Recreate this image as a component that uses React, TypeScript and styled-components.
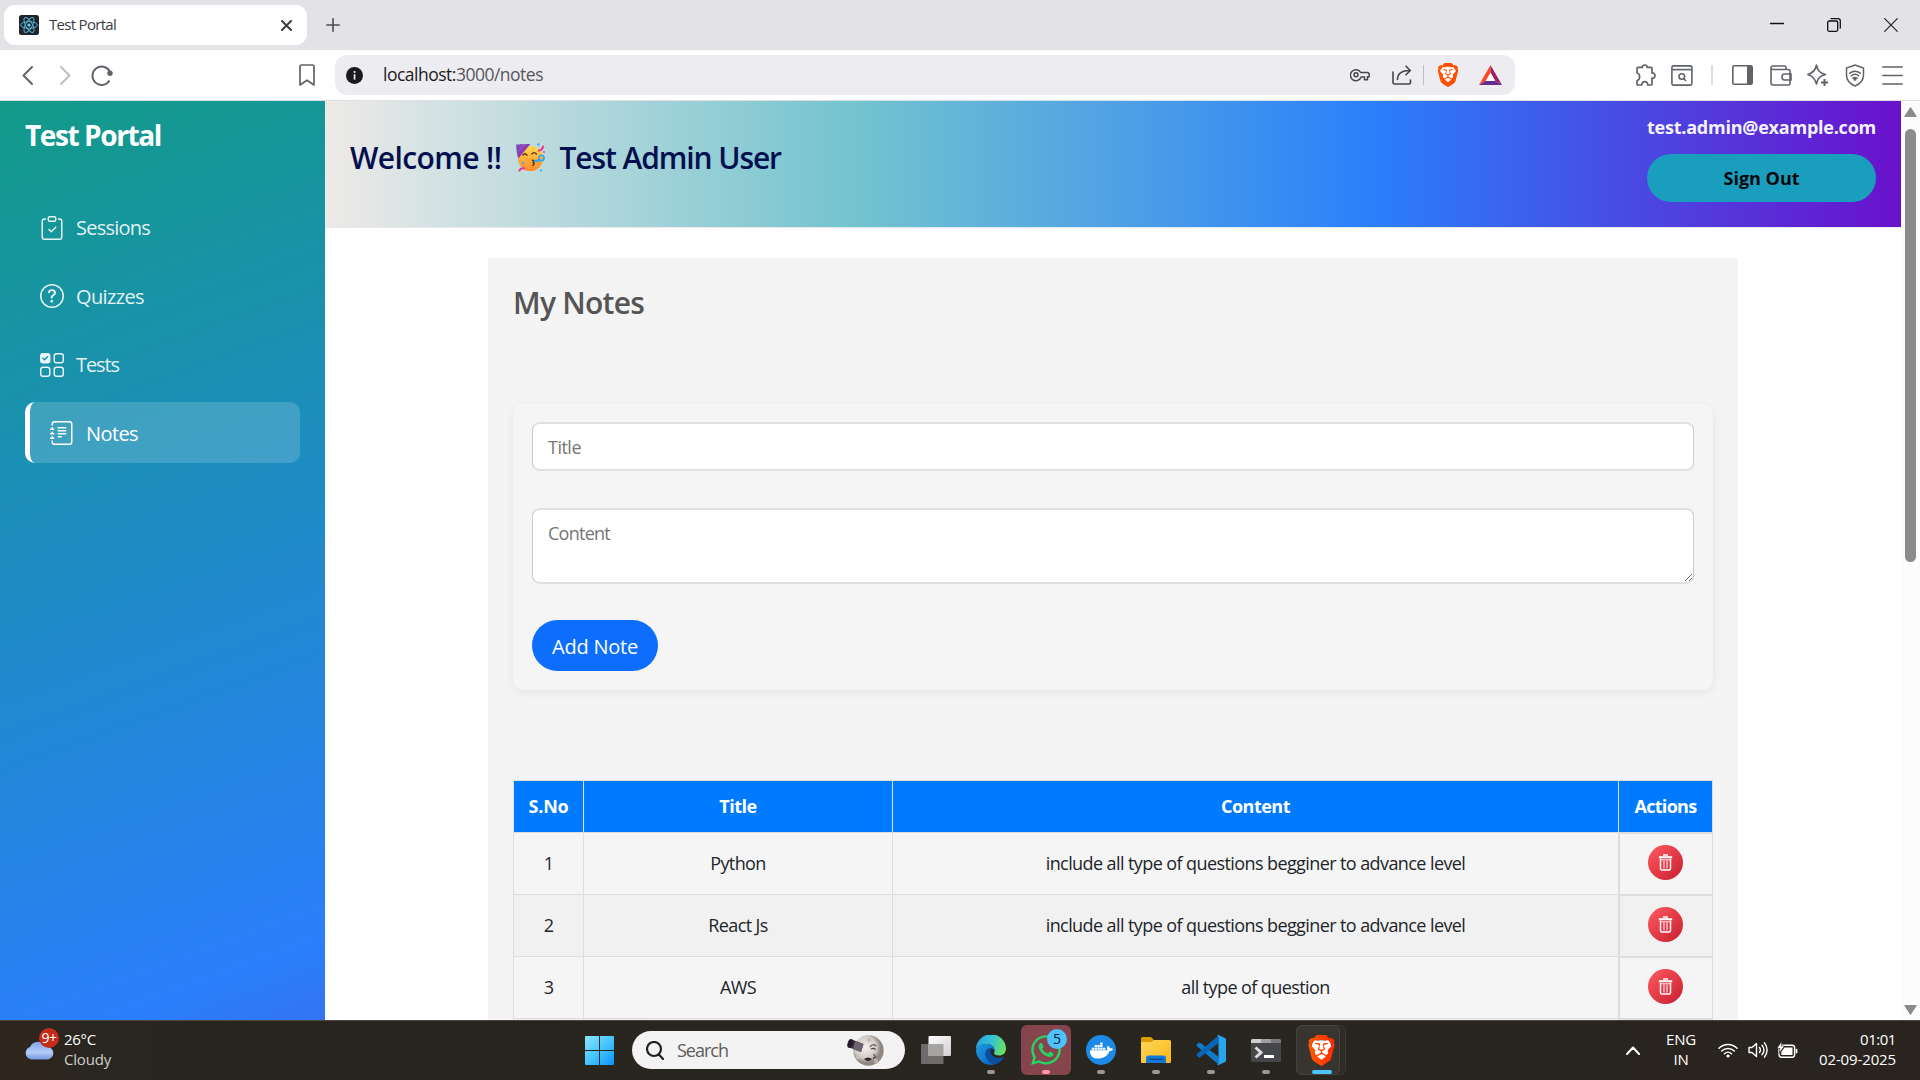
import React from 'react';
import styled, { createGlobalStyle, css } from 'styled-components';
import { BsClipboardCheck, BsQuestionCircle, BsUiChecksGrid, BsJournalText } from 'react-icons/bs';
import { FaWhatsapp, FaDocker } from 'react-icons/fa';
import { SiBrave } from 'react-icons/si';

const GlobalStyle = createGlobalStyle`
  * { box-sizing: border-box; }
  html, body { margin: 0; padding: 0; }
  body {
    width: 1920px;
    height: 1080px;
    overflow: hidden;
    background: #fff;
    font-family: "Open Sans", "Noto Sans", sans-serif;
    color: #212529;
  }
  svg { display: block; flex: none; }
`;

const Screen = styled.div`
  width: 1920px;
  height: 1080px;
  display: flex;
  flex-direction: column;
  overflow: hidden;
`;

const Text = styled.span<{ $size: number; $ls?: number; $weight?: number; $color?: string }>`
  font-size: ${p => p.$size}px;
  letter-spacing: ${p => p.$ls ?? 0}px;
  font-weight: ${p => p.$weight ?? 400};
  color: ${p => p.$color ?? 'inherit'};
  white-space: pre;
`;

/* ---------- browser chrome ---------- */

const TabStrip = styled.div`
  height: 50px;
  background: #e3e2e7;
  display: flex;
  align-items: center;
  padding: 0 22px 0 4px;
`;

const Tab = styled.div`
  width: 303px;
  height: 40px;
  border-radius: 11px;
  background: #fff;
  display: flex;
  align-items: center;
  padding: 0 15px;
  margin-right: 19px;
  color: #3b3d42;
  > span { flex: 1; margin: -2px 0 0 10px; }
`;

const WindowControls = styled.div`
  margin-left: auto;
  display: flex;
  align-items: center;
  gap: 43px;
`;

const Toolbar = styled.div`
  height: 51px;
  background: #fff;
  border-bottom: 1px solid #dfdee3;
  display: flex;
  align-items: center;
  padding: 0 17px 0 22px;
  color: #5f6368;
`;

const NavButtons = styled.div`
  display: flex;
  align-items: center;
  width: 278px;
`;

const Gap = styled.i<{ $w: number }>`
  flex: none;
  width: ${p => p.$w}px;
`;

const AddressBar = styled.div`
  width: 1180px;
  height: 40px;
  margin-right: 120px;
  border-radius: 12px;
  background: #edecf1;
  display: flex;
  align-items: center;
  padding: 0 13px 0 11px;
  flex: none;
  color: #44464b;
`;

const Url = styled.div`
  flex: 1;
  margin: -2px 0 0 20px;
  font-size: 17.5px;
  letter-spacing: -0.5px;
  color: #55575c;
  b { font-weight: 400; color: #1c1c20; }
`;

const Divider = styled.i<{ $w: number; $c: string }>`
  flex: none;
  width: ${p => p.$w}px;
  height: 20px;
  background: ${p => p.$c};
`;

/* ---------- page ---------- */

const Viewport = styled.div`
  height: 919px;
  display: flex;
  overflow: hidden;
`;

const Sidebar = styled.aside`
  width: 325px;
  flex: none;
  padding: 14px 25px;
  background: linear-gradient(160deg, #129a88 0%, #2a7ffb 92%, #3374f3 100%);
`;

const Brand = styled.h2`
  margin: 0 0 40px;
  height: 41px;
  line-height: 41px;
  font-size: 28px;
  font-weight: 700;
  letter-spacing: -1.4px;
  color: #fff;
`;

const NavList = styled.nav`
  display: flex;
  flex-direction: column;
  gap: 7.6px;
`;

const NavItem = styled.a<{ $active?: boolean; $ls: number }>`
  height: 61px;
  display: flex;
  align-items: center;
  gap: 12px;
  padding: 2px 0 0 15px;
  border-radius: 10px;
  font-size: 20px;
  letter-spacing: ${p => p.$ls}px;
  color: rgba(255, 255, 255, 0.9);
  ${p => p.$active && css`
    padding-left: 20px;
    border-left: 5px solid #fff;
    background: rgba(255, 255, 255, 0.16);
    color: #fff;
  `}
`;

const Main = styled.main`
  flex: 1;
  display: flex;
  flex-direction: column;
  align-items: center;
  overflow: hidden;
`;

const Header = styled.header`
  align-self: stretch;
  height: 127px;
  flex: none;
  padding: 11px 25px 24px;
  display: flex;
  justify-content: space-between;
  border-bottom: 1px solid #e9e9ec;
  background: linear-gradient(90deg, #eeeae8 0%, #74c4cf 33.3%, #2a7ffb 66.7%, #6a11cb 100%);
  background-clip: padding-box;
`;

const Welcome = styled.div`
  display: flex;
  align-items: center;
  color: #020f4e;
  height: 91px;
`;

const Account = styled.div`
  width: 229px;
  display: flex;
  flex-direction: column;
  align-items: center;
`;

const Email = styled.div`
  height: 30px;
  line-height: 30px;
  font-size: 18px;
  font-weight: 700;
  letter-spacing: -0.23px;
  color: #f4f3fd;
  white-space: nowrap;
`;

const SignOut = styled.button`
  margin-top: 12px;
  width: 229px;
  height: 48px;
  border: 0;
  border-radius: 25px;
  background: #199fbd;
  font: 700 18px "Open Sans", sans-serif;
  letter-spacing: 0;
  color: #04080c;
`;

const Panel = styled.section`
  width: 1250px;
  flex: 1;
  margin-top: 30px;
  padding: 25px 25px 0;
  background: #f4f4f4;
  overflow: hidden;
`;

const PanelTitle = styled.h2`
  margin: 0 0 80.5px;
  height: 40px;
  line-height: 40px;
  font-size: 30px;
  font-weight: 600;
  letter-spacing: -0.75px;
  color: #555;
`;

const Form = styled.form`
  height: 286px;
  padding: 18.5px 19px;
  border-radius: 10px;
  display: flex;
  flex-direction: column;
  align-items: flex-start;
  background: #f5f5f5;
  box-shadow: 0 2px 10px rgba(0, 0, 0, 0.07);
`;

const fieldStyle = css`
  width: 1162px;
  flex: none;
  border: 1px solid #ccc;
  border-width: 2px 1px;
  border-color: #e0e0e0 #ccc;
  border-radius: 8px;
  background: #fff;
  font: 400 18px/24px "Open Sans", sans-serif;
  outline: none;
  &::placeholder { color: #757575; }
`;

const TitleField = styled.input`
  ${fieldStyle}
  height: 49px;
  margin-bottom: 37px;
  padding: 0 15px;
  letter-spacing: -0.51px;
`;

const ContentField = styled.textarea`
  ${fieldStyle}
  height: 76px;
  margin-bottom: 36px;
  padding: 11px 15px;
  letter-spacing: -0.74px;
`;

const AddButton = styled.button`
  width: 126px;
  height: 51px;
  padding: 2px 0 0;
  border: 0;
  border-radius: 26px;
  background: #0d6efd;
  font: 400 20px "Open Sans", sans-serif;
  letter-spacing: -0.22px;
  color: #fff;
`;

const Table = styled.table`
  width: 1200px;
  margin-top: 90.5px;
  table-layout: fixed;
  border-collapse: separate;
  border-spacing: 0;
  border-left: 1px solid #ddd;
  border-top: 1px solid #ddd;
  text-align: center;
`;

const Th = styled.th<{ $w?: number; $ls?: number }>`
  width: ${p => (p.$w ? p.$w + 'px' : 'auto')};
  height: 52px;
  padding: 0 0 2px;
  border-right: 1px solid #ddd;
  border-bottom: 1px solid #ddd;
  background: #007bff;
  font-size: 18px;
  font-weight: 700;
  letter-spacing: ${p => p.$ls ?? -0.5}px;
  color: #fff;
`;

const Row = styled.tr`
  background: #f5f5f5;
  &:nth-child(even) { background: #f1f1f1; }
`;

const Td = styled.td<{ $action?: boolean }>`
  height: 62px;
  padding: 0 0 1px;
  border-right: 1px solid #ddd;
  border-bottom: 1px solid #ddd;
  font-size: 18px;
  letter-spacing: -0.59px;
  ${p => p.$action && css`
    padding: 0 2px 3px 0;
    border-left: 1px solid #ddd;
    border-top: 1px solid #ddd;
  `}
`;

const DeleteButton = styled.button`
  width: 35px;
  height: 35px;
  margin: 0 auto;
  padding: 0;
  border: 0;
  border-radius: 50%;
  display: flex;
  align-items: center;
  justify-content: center;
  background: linear-gradient(135deg, #ff5a5f, #c81e30);
`;

const Scrollbar = styled.div`
  width: 19px;
  flex: none;
  background: #fcfcfc;
  display: flex;
  flex-direction: column;
  align-items: center;
  padding: 6px 0 5px;
`;

const Thumb = styled.div`
  width: 11px;
  height: 433px;
  margin: 12px 0 auto;
  border-radius: 6px;
  background: #8b8b8b;
`;

/* ---------- taskbar ---------- */

const Taskbar = styled.footer`
  height: 60px;
  border-top: 1px solid #4a4743;
  background: linear-gradient(90deg, #30251c 0, #292620 90px, #28251f 400px, #29241f 1920px);
  display: flex;
  align-items: center;
  padding-bottom: 1px;
  color: #fff;
`;

const Weather = styled.div`
  width: 585px;
  padding-left: 23px;
  display: flex;
  align-items: center;
`;

const Stack = styled.div<{ $align?: string; $w?: number }>`
  display: flex;
  flex-direction: column;
  align-items: ${p => p.$align ?? 'flex-start'};
  width: ${p => (p.$w ? p.$w + 'px' : 'auto')};
  line-height: 20px;
  padding-bottom: 2px;
`;

const SearchBox = styled.div`
  width: 273px;
  height: 38px;
  margin: 0 16px 0 18px;
  padding: 0 21px 0 14px;
  border-radius: 19px;
  background: #f3f3f3;
  display: flex;
  align-items: center;
  > span { flex: 1; margin-left: 13px; }
`;

const Apps = styled.div`
  display: flex;
  gap: 5px;
  margin-left: 15px;
`;

const AppTile = styled.div<{ $bg?: string; $edge?: string }>`
  position: relative;
  width: 50px;
  height: 50px;
  border-radius: 6px;
  border: 1px solid ${p => p.$edge ?? 'transparent'};
  background: ${p => p.$bg ?? 'transparent'};
  display: flex;
  align-items: center;
  justify-content: center;
`;

const Indicator = styled.i<{ $w?: number; $c?: string }>`
  position: absolute;
  bottom: 0;
  left: 50%;
  transform: translateX(-50%);
  width: ${p => p.$w ?? 8}px;
  height: 4px;
  border-radius: 2px;
  background: ${p => p.$c ?? '#9b9894'};
`;

const Badge = styled.b`
  position: absolute;
  top: 3px;
  right: 3px;
  width: 20px;
  height: 20px;
  border-radius: 50%;
  background: #4cc2ff;
  color: #10202a;
  font-size: 14px;
  font-weight: 400;
  line-height: 20px;
  text-align: center;
`;

const StackedTile = styled.div`
  width: 50px;
  height: 50px;
  border: 1px solid #3c3935;
  border-radius: 6px;
  background: #2f2c28;
  display: flex;
`;

const BraveTile = styled(AppTile)`
  width: 44px;
  margin: -1px;
  padding-left: 6px;
  ${Indicator} { left: 25px; }
`;

const WeatherIcon = styled.div`
  position: relative;
  width: 32px;
  height: 48px;
  margin-right: 9px;
  padding-top: 13px;
`;

const AlertBadge = styled.b`
  position: absolute;
  top: 2px;
  left: 16px;
  width: 20px;
  height: 20px;
  border-radius: 50%;
  background: #c42b1c;
  color: #fff;
  font-size: 14px;
  font-weight: 400;
  line-height: 20px;
  letter-spacing: -0.6px;
  text-align: center;
`;

const Tray = styled.div`
  margin-left: auto;
  padding-right: 24px;
  display: flex;
  align-items: center;
`;

/* ---------- drawings ---------- */

const ReactFavicon = () => (
  <svg width="20" height="20" viewBox="0 0 20 20">
    <rect width="20" height="20" rx="2.5" fill="#20232a" />
    <g fill="none" stroke="#4fb3cf" strokeWidth="1">
      <ellipse cx="10" cy="10" rx="8.4" ry="3.3" />
      <ellipse cx="10" cy="10" rx="8.4" ry="3.3" transform="rotate(60 10 10)" />
      <ellipse cx="10" cy="10" rx="8.4" ry="3.3" transform="rotate(120 10 10)" />
    </g>
    <circle cx="10" cy="10" r="1.6" fill="#61dafb" />
  </svg>
);

const Line = ({ w, h, d, s = 1.6, c = 'currentColor' }: { w: number; h: number; d: string; s?: number; c?: string }) => (
  <svg width={w} height={h} viewBox={`0 0 ${w} ${h}`} fill="none" stroke={c} strokeWidth={s} strokeLinecap="round" strokeLinejoin="round">
    <path d={d} />
  </svg>
);

const InfoIcon = () => (
  <svg width="17" height="17" viewBox="0 0 17 17">
    <circle cx="8.5" cy="8.5" r="8.5" fill="#1b1b1f" />
    <rect x="7.7" y="4" width="1.7" height="1.9" fill="#edecf1" />
    <rect x="7.7" y="7.2" width="1.7" height="5.4" fill="#edecf1" />
  </svg>
);

const KeyIcon = () => (
  <svg width="20" height="14" viewBox="0 0 20 14" fill="none" stroke="currentColor" strokeWidth="1.5" strokeLinejoin="round">
    <path d="M10.7 4.5H18l1.2 1.3v3h-1.7v3h-3V9h-3.4A5.5 5.5 0 1 1 10.7 4.5Z" />
    <circle cx="6" cy="6.8" r="2" />
  </svg>
);

const BraveLogo = ({ size, from, to }: { size: number; from: string; to: string }) => (
  <svg width={size} height={size} viewBox="0 0 24 24">
    <defs>
      <linearGradient id={`brave${size}`} gradientUnits="userSpaceOnUse" x1="2" y1="0" x2="22" y2="0">
        <stop offset="0" stopColor={from} />
        <stop offset="1" stopColor={to} />
      </linearGradient>
    </defs>
    <path d="M6 4h12l2 5-3 10-5 3-5-3L4 9Z" fill="#fff" />
    <SiBrave size={24} fill={`url(#brave${size})`} stroke="none" />
  </svg>
);

const BatLogo = () => (
  <svg width="23" height="20" viewBox="0 0 23 20">
    <path d="M11.5 0 0 20l7-4.2 4.5-8Z" fill="#ff4724" />
    <path d="M11.5 0 23 20l-7-4.2-4.5-8Z" fill="#9e1f63" />
    <path d="M0 20h23l-7-4.2H7Z" fill="#662d91" />
    <path d="M11.5 7.6 16.2 15.9H6.8Z" fill="#fff" />
  </svg>
);

const PartyFace = () => (
  <svg width="29" height="29" viewBox="0 0 29 29">
    <defs>
      <linearGradient id="face" x1="0" y1="0" x2="0" y2="1">
        <stop offset="0" stopColor="#ffd84a" />
        <stop offset="1" stopColor="#ff8a2b" />
      </linearGradient>
    </defs>
    <circle cx="14.5" cy="15.5" r="12.6" fill="url(#face)" />
    <path d="M0 1.5 14.5 1 2.5 15.5Q0 9 0 1.5Z" fill="#6a5bd6" />
    <path d="m4 1.4 3-.1L1 8V4.8ZM10 1.2l3.6-.1L2 14.6 1.3 11Z" fill="#a3329c" />
    <g fill="none" stroke="#5b2b1c" strokeWidth="1.4" strokeLinecap="round">
      <path d="M7 12.2q2-2.8 4 0M16 11q2-2.8 4.4 0M16.4 17.2q3 .4.8 2.2 2 1.4-.4 2.8" />
    </g>
    <path d="M18 18.4 25 17" stroke="#3aa0e0" strokeWidth="2.4" />
    <circle cx="25.4" cy="15" r="2.6" fill="none" stroke="#35a8e6" strokeWidth="1.8" />
    <path d="M23 7.6Q26.5 7 27 3.6M3.5 27.5q.8-2.5 4.4-2.2" fill="none" stroke="#f0308f" strokeWidth="2" strokeLinecap="round" />
    <circle cx="22.5" cy="1.5" r="1.2" fill="#3fa9f5" />
    <circle cx="28" cy="9" r="0.9" fill="#f0308f" />
    <circle cx="7" cy="20" r="1.2" fill="#3fa9f5" />
    <circle cx="25" cy="27.4" r="1.1" fill="#3fa9f5" />
  </svg>
);

const TrashIcon = () => (
  <svg width="15" height="17" viewBox="0 0 15 17" fill="none" stroke="#fff">
    <path d="M5 1h5" strokeWidth="1.5" />
    <path d="M0.8 3.2h13.4" strokeWidth="2" />
    <path d="M2.5 4.5v10q0 1.6 1.4 1.6h7.2q1.4 0 1.4-1.6v-10" strokeWidth="1.5" />
    <path d="M6 6.6v8M9 6.6v8" strokeWidth="1.1" strokeOpacity="0.9" />
    <path d="M3 5.8h9" strokeWidth="0.9" />
  </svg>
);

const CloudIcon = () => (
  <svg width="32" height="21" viewBox="0 0 32 21">
    <defs>
      <linearGradient id="cloud" x1="0" y1="0" x2="0" y2="1">
        <stop offset="0" stopColor="#7fa4ea" />
        <stop offset="0.6" stopColor="#b4cdf8" />
        <stop offset="1" stopColor="#7396dd" />
      </linearGradient>
    </defs>
    <path d="M8 20.500A7 6.600 0 0 1 7 8 9 9 0 0 1 23 7.500 7 6.600 0 0 1 25 20.500Z" fill="url(#cloud)" />
  </svg>
);

const WindowsLogo = () => (
  <svg width="29" height="29" viewBox="0 0 29 29">
    <defs>
      <linearGradient id="win" x1="0" y1="0" x2="1" y2="1">
        <stop offset="0" stopColor="#8be4ff" />
        <stop offset="0.5" stopColor="#45c6fb" />
        <stop offset="1" stopColor="#0a93fb" />
      </linearGradient>
    </defs>
    <path d="M0 1Q0 0 1 0h13v14H0ZM15 0h13q1 0 1 1v13H15ZM0 15h14v14H1q-1 0-1-1ZM15 15h14v13q0 1-1 1H15Z" fill="url(#win)" />
  </svg>
);

const MoonArt = () => (
  <svg width="37" height="31" viewBox="0 0 37 31">
    <defs>
      <radialGradient id="moon" cx="0.4" cy="0.4">
        <stop offset="0" stopColor="#f4f1ec" />
        <stop offset="0.7" stopColor="#d3cdc5" />
        <stop offset="1" stopColor="#8f8780" />
      </radialGradient>
    </defs>
    <circle cx="21.500" cy="15.500" r="15.200" fill="url(#moon)" />
    <circle cx="22" cy="5" r="1.800" fill="#bdb8b4" />
    <circle cx="29" cy="26" r="2.400" fill="#b7b0aa" />
    <circle cx="11" cy="22" r="2" fill="#c9c3bc" />
    <path d="M3.500 4 16.500 9l-2.500 8L1 12Z" fill="#3a2f3c" />
    <path d="M8 6.500 16.500 9l-2.500 8-8-3Z" fill="#6d6470" />
    <ellipse cx="3.200" cy="8.500" rx="2.600" ry="4.600" fill="#241a2c" transform="rotate(18 3.200 8.500)" />
    <path d="M17 24q4-3 8 0-4 4-8 0Z" fill="#3a2430" />
    <path d="M23 12q3-4 6-1M24 14q2.500-1.500 4.500 .5M26.500 19l2 3-2.500 1.500" fill="none" stroke="#4b4046" strokeWidth="1.1" />
  </svg>
);

const TaskViewIcon = () => (
  <svg width="30" height="28" viewBox="0 0 30 28">
    <defs>
      <linearGradient id="tv" x1="0" y1="0" x2="1" y2="1">
        <stop offset="0" stopColor="#fff" />
        <stop offset="1" stopColor="#cfcfcf" />
      </linearGradient>
    </defs>
    <rect x="0" y="8" width="22.500" height="20" rx="1" fill="#6e6c6a" />
    <rect x="7.500" y="0" width="22.500" height="20" rx="1" fill="url(#tv)" />
    <rect x="7.500" y="8" width="15" height="12" fill="#a5a4a3" />
  </svg>
);

const EdgeIcon = () => (
  <svg width="30" height="30" viewBox="0 0 30 30">
    <defs>
      <linearGradient id="ed1" x1="0" y1="0.3" x2="1" y2="0.5">
        <stop offset="0" stopColor="#2a9fe0" />
        <stop offset="0.5" stopColor="#33c3d6" />
        <stop offset="1" stopColor="#6be25a" />
      </linearGradient>
      <linearGradient id="ed2" x1="0" y1="0" x2="1" y2="1">
        <stop offset="0" stopColor="#1b9de2" />
        <stop offset="1" stopColor="#0b62c0" />
      </linearGradient>
    </defs>
    <path d="M0 15A15 15 0 0 1 30 13.500C30 18 27 20.500 23 20.500 19.500 20.500 17.800 19 18 17.800 19.500 15.500 18.500 10 12 9 6 8.500 1 11.500 0 15Z" fill="url(#ed1)" />
    <path d="M0 15.500C1 10.500 6 8.600 11 9c5 .4 8 3.500 7.500 7-.8-2.400-3.200-3.500-5.500-2.500-4.500 2-5 8 .5 13 1.500 1.400 3 2 5 3A15 15 0 0 1 0 15.500Z" fill="url(#ed2)" />
    <path d="M12.500 13.700C8.500 16.500 9 23 13 26.500c2 1.800 5 2.800 7 2.600 3.500-1.200 6-3.600 7.600-6.400 .3-.6-.2-1-.8-.7C23 24 17.500 22.500 15.500 19.500 14.200 17.500 14.500 15 15.500 13.800 14.500 13.200 13.300 13.200 12.500 13.700Z" fill="#0c4fa0" />
  </svg>
);

const DockerIcon = () => (
  <svg width="30" height="30" viewBox="0 0 30 30">
    <circle cx="15" cy="15" r="15" fill="#1d8ae8" />
    <FaDocker x={4} y={4} size={23} color="#fff" />
  </svg>
);

const FolderIcon = () => (
  <svg width="30" height="28" viewBox="0 0 30 28">
    <defs>
      <linearGradient id="fo" x1="0" y1="0" x2="1" y2="1">
        <stop offset="0" stopColor="#ffd65c" />
        <stop offset="1" stopColor="#f9b816" />
      </linearGradient>
    </defs>
    <path d="M0 2.500Q0 1 1.500 1h8.500l3 3V10H0Z" fill="#dd9c05" />
    <path d="M0 6h10.500L13 4h15.500Q30 4 30 5.500V26q0 1-1 1H1q-1 0-1-1Z" fill="url(#fo)" />
    <path d="M5 27v-5q0-2.500 2.500-2.500h15Q25 19.500 25 22v5Z" fill="#1279d6" />
    <path d="M8 23.300h14" stroke="#0a4c92" strokeWidth="1.5" />
  </svg>
);

const CodeIcon = () => (
  <svg width="30" height="30" viewBox="0 0 30 30">
    <path d="M1 9.300 2.700 7.700Q3.400 7.200 4.200 7.700L22.500 21.800V29.500L1 11.300Q0 10.300 1 9.300Z" fill="#0f7bcb" />
    <path d="M1 20.700 2.700 22.300Q3.400 22.800 4.200 22.300L22.500 8.200V.5L1 18.700Q0 19.700 1 20.700Z" fill="#0a66b5" />
    <path d="M22.500 0 29 3q1 .5 1 1.600v20.800q0 1.100-1 1.600l-6.500 3Q21.500 30 21 29.300 22.500 29 22.500 28V2Q22.500 1 21 .7 21.500 0 22.500 0Z" fill="#28a4ef" />
  </svg>
);

const TerminalIcon = () => (
  <svg width="30" height="23" viewBox="0 0 30 23">
    <rect width="30" height="23" rx="1.5" fill="#46474a" />
    <path d="M0 4V1.500Q0 0 1.500 0H10v4Z" fill="#d0d0d0" />
    <path d="M10 0h10v4H10Z" fill="#a0a0a0" />
    <path d="M20 0h8.500Q30 0 30 1.500V4H20Z" fill="#7b7b7b" />
    <path d="M4.500 8.500 10 13.500 4.500 18.500" fill="none" stroke="#dcdcdc" strokeWidth="3" />
    <path d="M13 17.500h10" stroke="#fff" strokeWidth="3" />
  </svg>
);

const WifiIcon = () => (
  <svg width="20" height="16" viewBox="0 0 20 16" fill="none" stroke="#fff" strokeWidth="1.5" strokeLinecap="round">
    <path d="M1 6.200a12.700 12.700 0 0 1 18 0M3.700 9a8.900 8.900 0 0 1 12.600 0M6.500 11.700a5 5 0 0 1 7 0" />
    <circle cx="10" cy="14" r="1.300" fill="#fff" strokeWidth="0.5" />
  </svg>
);

const VolumeIcon = () => (
  <svg width="20" height="18" viewBox="0 0 20 18" fill="none" stroke="#fff" strokeWidth="1.4" strokeLinecap="round" strokeLinejoin="round">
    <path d="M1 6.500v5h3l4.500 4V2.500L4 6.500ZM11.500 6.500q1.800 2.500 0 5M14 4.200q4 4.800 0 9.600M16.500 1.800q5.200 7.200 0 14.400" />
  </svg>
);

const BatteryIcon = () => (
  <svg width="21" height="18" viewBox="0 0 21 18">
    <rect x="2" y="4.200" width="15.600" height="12" rx="2.400" fill="none" stroke="#fff" strokeWidth="1.4" />
    <path d="M7.500 6.500H15.500v7.500H4.300V11Z" fill="#fff" />
    <rect x="18.600" y="7.800" width="1.800" height="4.600" rx="0.9" fill="#fff" />
    <path d="M4.800 0 0 7.500h3L2 12.500 7.500 5H4.300Z" fill="#fff" stroke="#29241f" strokeWidth="0.6" />
  </svg>
);

/* ---------- data ---------- */

const navigation = [
  { label: 'Sessions', Icon: BsClipboardCheck, ls: -0.77 },
  { label: 'Quizzes', Icon: BsQuestionCircle, ls: -0.63 },
  { label: 'Tests', Icon: BsUiChecksGrid, ls: -1.1 },
  { label: 'Notes', Icon: BsJournalText, ls: -0.6, active: true },
];

const notes = [
  { title: 'Python', content: 'include all type of questions begginer to advance level' },
  { title: 'React Js', content: 'include all type of questions begginer to advance level' },
  { title: 'AWS', content: 'all type of question' },
];

export default function App() {
  return (
    <Screen>
      <GlobalStyle />
      <TabStrip>
        <Tab>
          <ReactFavicon />
          <Text $size={15} $ls={-0.7}>Test Portal</Text>
          <Line w={11} h={11} s={2} c="#3a3c40" d="M1 1l9 9M10 1l-9 9" />
        </Tab>
        <Line w={14} h={14} s={1.6} c="#4b4d52" d="M7 .8v12.400M.8 7h12.400" />
        <WindowControls>
          <Line w={14} h={14} s={1.3} c="#111" d="M.5 5.500h13" />
          <svg width="14" height="14" viewBox="0 0 14 14" fill="none" stroke="#111" strokeWidth="1.3">
            <rect x="0.7" y="3" width="10" height="10.3" rx="1.5" />
            <path d="M3.500 .7H11q2.300 0 2.300 2.300v7.500" />
          </svg>
          <Line w={14} h={14} s={1.2} c="#222" d="M.7 .7l12.600 12.600M13.300 .7 .7 13.300" />
        </WindowControls>
      </TabStrip>

      <Toolbar>
        <NavButtons>
          <Line w={11} h={19} s={1.9} d="M10 1 1.500 9.500 10 18" />
          <Gap $w={27} />
          <Line w={11} h={19} s={1.9} c="#bdbec2" d="M1 1l8.500 8.500L1 18" />
          <Gap $w={20} />
          <svg width="22" height="21" viewBox="0 0 22 21" fill="none" stroke="currentColor" strokeWidth="1.9">
            <path d="M18.500 15.500A9.200 9.200 0 1 1 18.800 6.500" />
            <circle cx="19" cy="8.200" r="2.700" fill="currentColor" stroke="none" />
          </svg>
        </NavButtons>
        <Line w={16} h={22} s={1.7} d="M1 2.500Q1 1 2.500 1h11Q15 1 15 2.500V21L8 16.200 1 21Z" />
        <Gap $w={20} />
        <AddressBar>
          <InfoIcon />
          <Url><b>localhost:</b>3000/notes</Url>
          <KeyIcon />
          <Gap $w={22} />
          <Line w={20} h={20} s={1.6} d="M1 7v10.500Q1 19 2.500 19H17q1.500 0 1.500-1.500V15M5.500 14.500C5.500 8.500 9 5.500 18 5.500M14 1.200l4.300 4.300L14 9.800" />
          <Gap $w={11} />
          <Divider $w={1} $c="#bfbec5" />
          <Gap $w={12} />
          <BraveLogo size={24} from="#ff5500" to="#ff4a00" />
          <Gap $w={19} />
          <BatLogo />
        </AddressBar>
        <Line w={21} h={22} s={1.7} d="M2 4.300Q2 3.300 3 3.300H7.500C6.500 .2 13 .2 12 3.300H16q1 0 1 1V9C21 8.200 21 15 17 14.200V20q0 1-1 1H12.700C13 16.500 6.500 16.500 6.800 21H3Q2 21 2 20V16.500C5.500 16 5.500 9.500 2 9Z" />
        <Gap $w={15} />
        <svg width="22" height="21" viewBox="0 0 22 21" fill="none" stroke="currentColor" strokeWidth="1.6">
          <rect x="0.9" y="0.9" width="20" height="19.2" rx="1.5" />
          <path d="M1 4.600h20" />
          <circle cx="10.800" cy="11.500" r="2.800" />
          <path d="m12.800 13.500 2.200 2.500" />
        </svg>
        <Gap $w={18} />
        <Divider $w={2} $c="#dddce3" />
        <Gap $w={19} />
        <svg width="21" height="20" viewBox="0 0 21 20">
          <rect x="0.8" y="0.8" width="19.4" height="18.4" rx="1.5" fill="none" stroke="currentColor" strokeWidth="1.6" />
          <path d="M15 1h5v18h-5Z" fill="currentColor" />
        </svg>
        <Gap $w={17} />
        <svg width="22" height="21" viewBox="0 0 22 21" fill="none" stroke="currentColor" strokeWidth="1.6">
          <path d="M16 4.500V2.500Q16 1 14.500 1h-12Q1 1 1 2.700V18q0 2 2 2h15.500q1.500 0 1.500-1.500V6q0-1.500-1.500-1.500H2.500Q1 4.500 1 3" />
          <path d="M21 9h-6.500Q12 9 12 12t2.500 3H21Z" />
        </svg>
        <Gap $w={15} />
        <svg width="22" height="23" viewBox="0 0 22 23" fill="none" stroke="currentColor" strokeWidth="1.6" strokeLinejoin="round">
          <path d="M9.500 1C10.500 6.500 12.500 8.800 18.500 10.500 12.500 12.200 10.800 14.500 9.500 20 8.200 14.500 6 12.200 .8 10.500 6 8.800 8.500 6.500 9.500 1Z" />
          <path d="M17.500 15v7M14 18.500h7" strokeWidth="2" />
        </svg>
        <Gap $w={16} />
        <svg width="20" height="23" viewBox="0 0 20 23" fill="none" stroke="currentColor" strokeWidth="1.5" strokeLinecap="round">
          <path d="M10 1 18.500 4v7q0 7.500-8.500 11Q1.500 18.500 1.500 11V4Z" />
          <path d="M4.800 9.200q5.200-4 10.400 0M6.300 11.800q3.700-2.900 7.400 0M8 14.200q2-1.400 4 0" />
          <circle cx="10" cy="15.300" r="0.8" fill="currentColor" />
        </svg>
        <Gap $w={17} />
        <Line w={21} h={19} s={1.7} d="M.8 1h19.400M.8 9.500h19.400M.8 18h19.400" />
      </Toolbar>

      <Viewport>
        <Sidebar>
          <Brand>Test Portal</Brand>
          <NavList>
            {navigation.map(({ label, Icon, ls, active }) => (
              <NavItem key={label} $active={active} $ls={ls}>
                <Icon size={24} />
                {label}
              </NavItem>
            ))}
          </NavList>
        </Sidebar>

        <Main>
          <Header>
            <Welcome>
              <Text $size={30} $weight={600} $ls={-0.6}>Welcome !!</Text>
              <Gap $w={15} />
              <PartyFace />
              <Gap $w={14} />
              <Text $size={30} $weight={600} $ls={-1.1}>Test Admin User</Text>
            </Welcome>
            <Account>
              <Email>test.admin@example.com</Email>
              <SignOut>Sign Out</SignOut>
            </Account>
          </Header>

          <Panel>
            <PanelTitle>My Notes</PanelTitle>
            <Form>
              <TitleField placeholder="Title" />
              <ContentField placeholder="Content" />
              <AddButton type="button">Add Note</AddButton>
            </Form>
            <Table>
              <thead>
                <tr>
                  <Th $w={70} $ls={-0.2}>S.No</Th>
                  <Th $w={309}>Title</Th>
                  <Th>Content</Th>
                  <Th $w={94} $ls={-0.7}>Actions</Th>
                </tr>
              </thead>
              <tbody>
                {notes.map((note, i) => (
                  <Row key={note.title}>
                    <Td>{i + 1}</Td>
                    <Td>{note.title}</Td>
                    <Td>{note.content}</Td>
                    <Td $action>
                      <DeleteButton><TrashIcon /></DeleteButton>
                    </Td>
                  </Row>
                ))}
                <Row>
                  <Td />
                  <Td />
                  <Td />
                  <Td $action />
                </Row>
              </tbody>
            </Table>
          </Panel>
        </Main>

        <Scrollbar>
          <svg width="13" height="10" viewBox="0 0 13 10"><path d="M6.500 .5 12.300 9.500H.7Z" fill="#8b8b8b" stroke="#8b8b8b" strokeLinejoin="round" /></svg>
          <Thumb />
          <svg width="13" height="10" viewBox="0 0 13 10"><path d="M6.500 9.500 12.300 .5H.7Z" fill="#8b8b8b" stroke="#8b8b8b" strokeLinejoin="round" /></svg>
        </Scrollbar>
      </Viewport>

      <Taskbar>
        <Weather>
          <WeatherIcon>
            <CloudIcon />
            <AlertBadge>9+</AlertBadge>
          </WeatherIcon>
          <Stack>
            <Text $size={15} $ls={-0.3}>26°C</Text>
            <Text $size={15} $ls={-0.2} $color="#cfcdca">Cloudy</Text>
          </Stack>
        </Weather>
        <WindowsLogo />
        <SearchBox>
          <Line w={18} h={19} s={2.2} c="#222" d="M15 8a7 7 0 1 1-14 0 7 7 0 0 1 14 0ZM12.500 13l4.500 5" />
          <Text $size={18} $ls={-1} $color="#5c5c5c">Search</Text>
          <MoonArt />
        </SearchBox>
        <TaskViewIcon />
        <Apps>
          <AppTile><EdgeIcon /><Indicator /></AppTile>
          <AppTile $bg="#86454d">
            <FaWhatsapp size={34} color="#25d366" />
            <Badge>5</Badge>
            <Indicator $c="#ff9aa6" />
          </AppTile>
          <AppTile><DockerIcon /><Indicator /></AppTile>
          <AppTile><FolderIcon /><Indicator /></AppTile>
          <AppTile><CodeIcon /><Indicator /></AppTile>
          <AppTile><TerminalIcon /><Indicator /></AppTile>
          <StackedTile>
            <BraveTile $bg="#383531" $edge="#46433f">
              <BraveLogo size={31} from="#ff5a00" to="#ff2a00" />
              <Indicator $w={20} $c="#4cc2ff" />
            </BraveTile>
          </StackedTile>
        </Apps>
        <Tray>
          <Line w={14} h={9} s={2} c="#fff" d="M1 8l6-6.500L13 8" />
          <Gap $w={26} />
          <Stack $align="center" $w={30}>
            <Text $size={15} $ls={-0.2}>ENG</Text>
            <Text $size={15} $ls={-0.2}>IN</Text>
          </Stack>
          <Gap $w={22} />
          <WifiIcon />
          <Gap $w={10} />
          <VolumeIcon />
          <Gap $w={9} />
          <BatteryIcon />
          <Gap $w={21} />
          <Stack $align="flex-end" $w={77}>
            <Text $size={15} $ls={-0.45}>01:01</Text>
            <Text $size={15} $ls={-0.13}>02-09-2025</Text>
          </Stack>
        </Tray>
      </Taskbar>
    </Screen>
  );
}
